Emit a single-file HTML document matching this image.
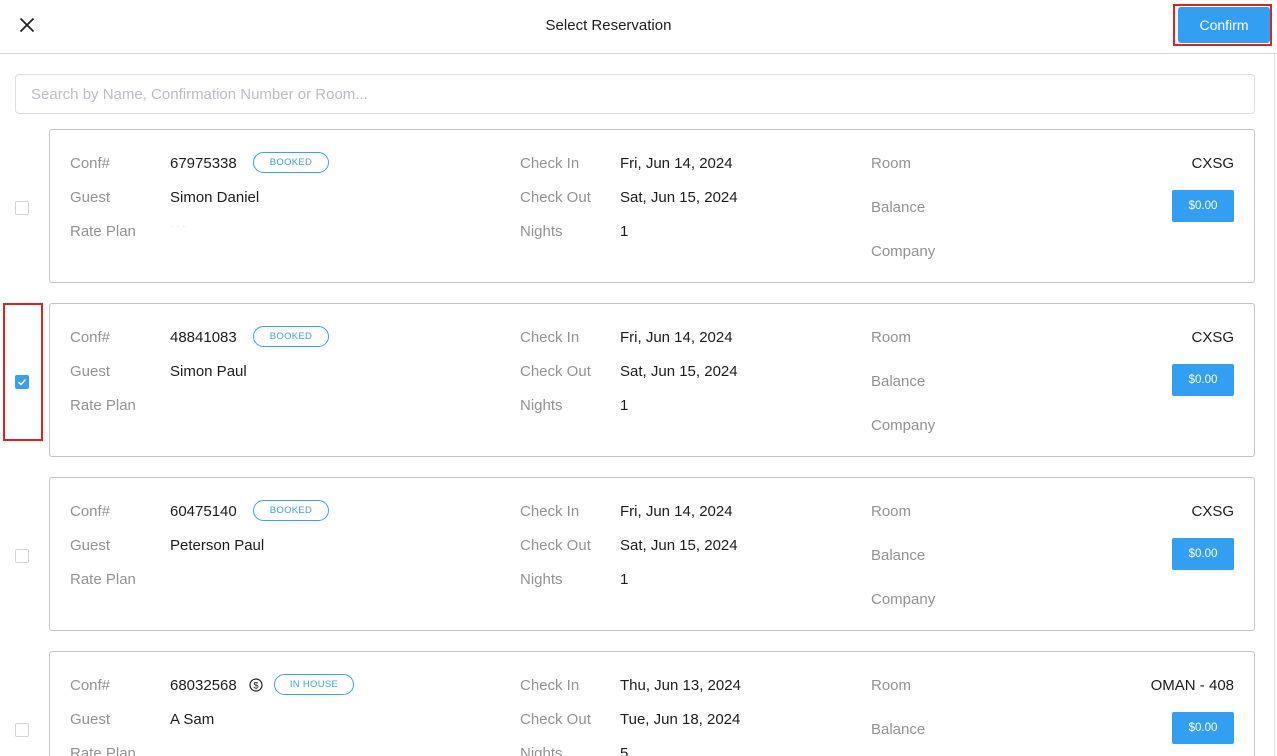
<!DOCTYPE html>
<html><head><meta charset="utf-8"><style>
*{box-sizing:border-box;margin:0;padding:0}
html,body{width:1277px;height:756px;overflow:hidden}
body{background:#fff;font-family:"Liberation Sans",sans-serif;position:relative;color:#222}
.a{position:absolute;white-space:nowrap}
.hdr{position:absolute;left:0;top:0;width:1277px;height:54px;border-bottom:1px solid #d8d8dc}
.vr{position:absolute;left:1274px;top:54px;width:1px;height:702px;background:#e2e2e6}
.search{position:absolute;left:15px;top:74px;width:1240px;height:40px;border:1px solid #dcdde2;border-radius:4px;color:#bcbec6;font-size:15px;padding:11px 15px}
.card{position:absolute;left:49px;width:1206px;height:154px;border:1px solid #c4c4c4;border-radius:3px}
.lbl{position:absolute;font-size:15px;color:#939393;white-space:nowrap;line-height:20px;margin-top:1px}
.val{position:absolute;font-size:15px;color:#1e1e1e;white-space:nowrap;line-height:20px;margin-top:1px}
.badge{position:absolute;height:21px;border:1px solid #3aa0f3;border-radius:11px;color:#3aa0f3;font-size:9.5px;text-align:center;line-height:19px;letter-spacing:.3px}
.bal{position:absolute;left:1122px;width:62px;height:32px;background:#339ff3;border-radius:2px;color:#fff;font-size:11.5px;text-align:center;line-height:32px}
.cb{position:absolute;left:15px;width:14px;height:14px;border:1px solid #d4d4d8;border-radius:2px;background:#fff}
</style></head><body>
<div class="hdr"></div>
<svg class="a" style="left:19px;top:17px" width="16" height="16" viewBox="0 0 16 16"><path d="M1.5 1.5L14.5 14.5M14.5 1.5L1.5 14.5" stroke="#222" stroke-width="1.8"/></svg>
<div class="a" style="left:0;width:1217px;text-align:center;top:16px;font-size:15px;color:#1e1e1e;line-height:20px">Select Reservation</div>
<div class="a" style="left:1173px;top:4px;width:99px;height:42px;border:2px solid #e0231f"></div>
<div class="a" style="left:1178px;top:7px;width:92px;height:36px;background:#339ff3;border-radius:3px;color:#fff;font-size:14px;text-align:center;line-height:36px">Confirm</div>
<div class="vr"></div>
<div class="search">Search by Name, Confirmation Number or Room...</div>

<div class="cb" style="top:201px"></div>
<div class="card" style="top:129px">
 <div class="lbl" style="left:20px;top:23px">Conf#</div><div class="val" style="left:120px;top:23px">67975338</div>
 <div class="badge" style="left:203px;top:22px;width:76px">BOOKED</div>
 <div class="lbl" style="left:20px;top:57px">Guest</div><div class="val" style="left:120px;top:57px">Simon Daniel</div>
 <div class="lbl" style="left:20px;top:91px">Rate Plan</div><div class="val" style="left:120px;top:86px;color:#ddd;font-size:10px">· · ·</div>
 <div class="lbl" style="left:470px;top:23px">Check In</div><div class="val" style="left:570px;top:23px">Fri, Jun 14, 2024</div>
 <div class="lbl" style="left:470px;top:57px">Check Out</div><div class="val" style="left:570px;top:57px">Sat, Jun 15, 2024</div>
 <div class="lbl" style="left:470px;top:91px">Nights</div><div class="val" style="left:570px;top:91px">1</div>
 <div class="lbl" style="left:821px;top:23px">Room</div><div class="val" style="right:20px;top:23px">CXSG</div>
 <div class="lbl" style="left:821px;top:67px">Balance</div><div class="bal" style="top:60px">$0.00</div>
 <div class="lbl" style="left:821px;top:111px">Company</div>
</div>

<div class="a" style="left:3px;top:303px;width:40px;height:138px;border:2px solid #e0231f"></div>
<div class="a" style="left:15px;top:375px;width:14px;height:14px;background:#39a0f3;border-radius:2px"></div>
<svg class="a" style="left:15px;top:375px" width="14" height="14" viewBox="0 0 14 14"><path d="M3.5 7.2L6 9.5L10.5 4.5" stroke="#fff" stroke-width="1.4" fill="none"/></svg>
<div class="card" style="top:303px">
 <div class="lbl" style="left:20px;top:23px">Conf#</div><div class="val" style="left:120px;top:23px">48841083</div>
 <div class="badge" style="left:203px;top:22px;width:76px">BOOKED</div>
 <div class="lbl" style="left:20px;top:57px">Guest</div><div class="val" style="left:120px;top:57px">Simon Paul</div>
 <div class="lbl" style="left:20px;top:91px">Rate Plan</div>
 <div class="lbl" style="left:470px;top:23px">Check In</div><div class="val" style="left:570px;top:23px">Fri, Jun 14, 2024</div>
 <div class="lbl" style="left:470px;top:57px">Check Out</div><div class="val" style="left:570px;top:57px">Sat, Jun 15, 2024</div>
 <div class="lbl" style="left:470px;top:91px">Nights</div><div class="val" style="left:570px;top:91px">1</div>
 <div class="lbl" style="left:821px;top:23px">Room</div><div class="val" style="right:20px;top:23px">CXSG</div>
 <div class="lbl" style="left:821px;top:67px">Balance</div><div class="bal" style="top:60px">$0.00</div>
 <div class="lbl" style="left:821px;top:111px">Company</div>
</div>

<div class="cb" style="top:549px"></div>
<div class="card" style="top:477px">
 <div class="lbl" style="left:20px;top:23px">Conf#</div><div class="val" style="left:120px;top:23px">60475140</div>
 <div class="badge" style="left:203px;top:22px;width:76px">BOOKED</div>
 <div class="lbl" style="left:20px;top:57px">Guest</div><div class="val" style="left:120px;top:57px">Peterson Paul</div>
 <div class="lbl" style="left:20px;top:91px">Rate Plan</div>
 <div class="lbl" style="left:470px;top:23px">Check In</div><div class="val" style="left:570px;top:23px">Fri, Jun 14, 2024</div>
 <div class="lbl" style="left:470px;top:57px">Check Out</div><div class="val" style="left:570px;top:57px">Sat, Jun 15, 2024</div>
 <div class="lbl" style="left:470px;top:91px">Nights</div><div class="val" style="left:570px;top:91px">1</div>
 <div class="lbl" style="left:821px;top:23px">Room</div><div class="val" style="right:20px;top:23px">CXSG</div>
 <div class="lbl" style="left:821px;top:67px">Balance</div><div class="bal" style="top:60px">$0.00</div>
 <div class="lbl" style="left:821px;top:111px">Company</div>
</div>

<div class="cb" style="top:723px"></div>
<div class="card" style="top:651px">
 <div class="lbl" style="left:20px;top:23px">Conf#</div><div class="val" style="left:120px;top:23px">68032568</div>
 <svg class="a" style="left:199px;top:26px" width="14" height="14" viewBox="0 0 14 14"><circle cx="7" cy="7" r="6" stroke="#222" stroke-width="1.2" fill="none"/><text x="7" y="10.3" font-size="9" text-anchor="middle" font-family="Liberation Sans" fill="#222">$</text></svg>
 <div class="badge" style="left:224px;top:22px;width:80px">IN HOUSE</div>
 <div class="lbl" style="left:20px;top:57px">Guest</div><div class="val" style="left:120px;top:57px">A Sam</div>
 <div class="lbl" style="left:20px;top:91px">Rate Plan</div>
 <div class="lbl" style="left:470px;top:23px">Check In</div><div class="val" style="left:570px;top:23px">Thu, Jun 13, 2024</div>
 <div class="lbl" style="left:470px;top:57px">Check Out</div><div class="val" style="left:570px;top:57px">Tue, Jun 18, 2024</div>
 <div class="lbl" style="left:470px;top:91px">Nights</div><div class="val" style="left:570px;top:91px">5</div>
 <div class="lbl" style="left:821px;top:23px">Room</div><div class="val" style="right:20px;top:23px">OMAN - 408</div>
 <div class="lbl" style="left:821px;top:67px">Balance</div><div class="bal" style="top:60px">$0.00</div>
</div>
</body></html>
